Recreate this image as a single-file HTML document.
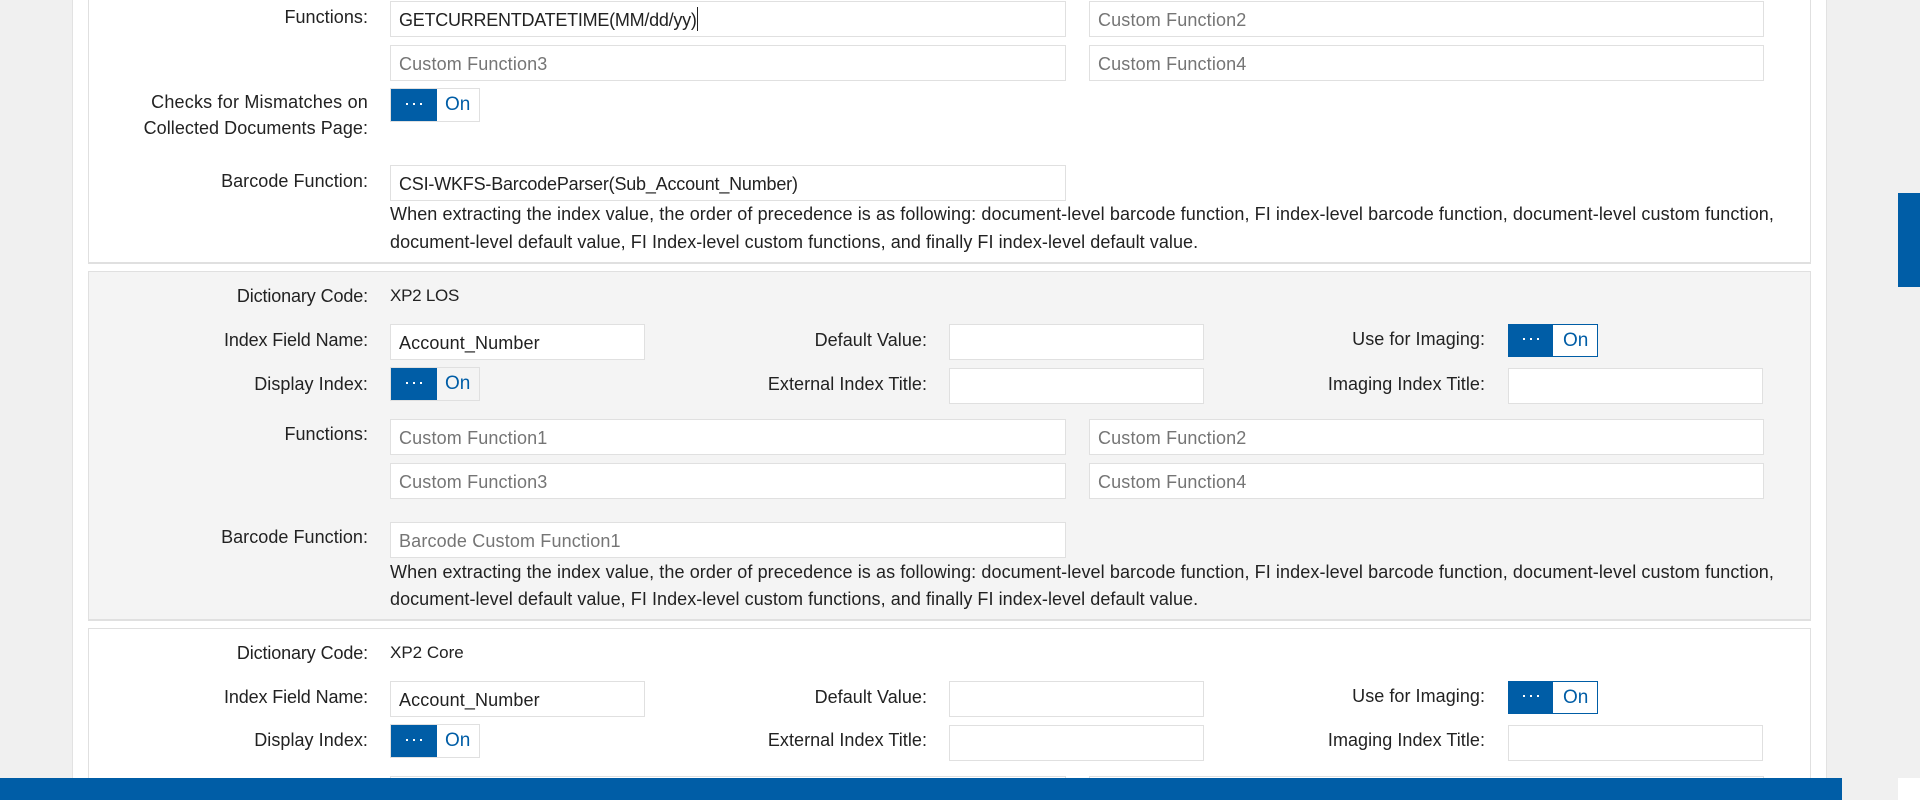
<!DOCTYPE html>
<html><head><meta charset="utf-8"><title>Index Settings</title>
<style>
html,body{margin:0;padding:0;width:1920px;height:800px;overflow:hidden;background:#f0f0f0}
body{position:relative;font-family:"Liberation Sans",sans-serif;font-size:18px;color:#222}
div{box-sizing:border-box}
.a{position:absolute}
.panel{left:72px;top:-2px;width:1755px;height:802px;background:#fff;border:1px solid #e2e2e2}
.box{left:88px;width:1723px;border:1px solid #e0e0e0;border-bottom-width:2px;background:#fff}
.g{background:#f4f4f4}
.l{position:absolute;text-align:right;line-height:20px;height:20px;white-space:nowrap;left:0;letter-spacing:.05px}
.c1{width:368px}.c2{width:927px}.c3{width:1485px}
.i{position:absolute;height:36px;border:1px solid #e0e0e0;background:#fff;line-height:36px;padding-left:8px;white-space:nowrap;overflow:hidden;letter-spacing:.12px}
.p{color:#757575;letter-spacing:.15px}
.w1{left:390px;width:676px}.w2{left:1089px;width:675px}.w3{left:390px;width:255px}.w4{left:949px;width:255px}.w5{left:1508px;width:255px}
.t{position:absolute;line-height:27px;white-space:nowrap;left:390px;letter-spacing:.095px}
.t2{letter-spacing:.055px}
.d{font-size:17px;letter-spacing:0}
.tg{position:absolute;width:90px;height:34px;border:1px solid #e0e0e0}
.tg.b{border-color:#005da6;background:#fff}
.tg .k{position:absolute;left:0;top:0;width:46px;height:32px;background:#005da6}
.tg.b .k{left:-1px;top:-1px;height:33px;width:45px}
.tg .k i{position:absolute;top:14px;width:2px;height:2px;background:#fff}
.tg .o{position:absolute;left:54px;top:5px;font-size:19px;line-height:22px;color:#005da6}
.f{letter-spacing:-.12px}
</style></head><body>
<div class="a panel"></div>
<div class="a" style="left:1898px;top:193px;width:22px;height:94px;background:#005da6"></div>

<div class="a box" style="top:-10px;height:274px"></div>
<div class="l c1" style="top:7px">Functions:</div>
<div class="i w1" style="top:1px;letter-spacing:-.25px">GETCURRENTDATETIME(MM/dd/yy)</div>
<div class="a" style="left:697px;top:7px;width:1px;height:24px;background:#222"></div>
<div class="i w2 p" style="top:1px">Custom Function2</div>
<div class="i w1 p" style="top:45px">Custom Function3</div>
<div class="i w2 p" style="top:45px">Custom Function4</div>
<div class="l c1" style="top:92px;letter-spacing:.2px">Checks for Mismatches on</div>
<div class="l c1" style="top:118px">Collected Documents Page:</div>
<div class="tg" style="left:390px;top:88px"><div class="k"><i style="left:15px"></i><i style="left:22px"></i><i style="left:29px"></i></div><div class="o">On</div></div>
<div class="l c1" style="top:171px">Barcode Function:</div>
<div class="i w1" style="top:165px;letter-spacing:-.2px">CSI-WKFS-BarcodeParser(Sub_Account_Number)</div>
<div class="t" style="top:201px">When extracting the index value, the order of precedence is as following: document-level barcode function, FI index-level barcode function, document-level custom function,</div>
<div class="t t2" style="top:229px">document-level default value, FI Index-level custom functions, and finally FI index-level default value.</div>

<div class="a box g" style="top:271px;height:350px"></div>
<div class="l c1 f" style="top:286px">Dictionary Code:</div>
<div class="t d" style="top:282px;letter-spacing:-.25px">XP2 LOS</div>
<div class="l c1 f" style="top:330px">Index Field Name:</div>
<div class="i w3" style="top:324px">Account_Number</div>
<div class="l c2" style="top:330px">Default Value:</div>
<div class="i w4" style="top:324px"></div>
<div class="l c3" style="top:329px">Use for Imaging:</div>
<div class="tg b" style="left:1508px;top:324px;height:33px"><div class="k"><i style="left:15px"></i><i style="left:22px"></i><i style="left:29px"></i></div><div class="o">On</div></div>
<div class="l c1" style="top:374px">Display Index:</div>
<div class="tg" style="left:390px;top:367px"><div class="k"><i style="left:15px"></i><i style="left:22px"></i><i style="left:29px"></i></div><div class="o">On</div></div>
<div class="l c2" style="top:374px">External Index Title:</div>
<div class="i w4" style="top:368px"></div>
<div class="l c3" style="top:374px">Imaging Index Title:</div>
<div class="i w5" style="top:368px"></div>
<div class="l c1" style="top:424px">Functions:</div>
<div class="i w1 p" style="top:419px">Custom Function1</div>
<div class="i w2 p" style="top:419px">Custom Function2</div>
<div class="i w1 p" style="top:463px">Custom Function3</div>
<div class="i w2 p" style="top:463px">Custom Function4</div>
<div class="l c1" style="top:527px">Barcode Function:</div>
<div class="i w1 p" style="top:522px">Barcode Custom Function1</div>
<div class="t" style="top:559px">When extracting the index value, the order of precedence is as following: document-level barcode function, FI index-level barcode function, document-level custom function,</div>
<div class="t t2" style="top:586px">document-level default value, FI Index-level custom functions, and finally FI index-level default value.</div>

<div class="a box" style="top:628px;height:180px"></div>
<div class="l c1 f" style="top:643px">Dictionary Code:</div>
<div class="t d" style="top:639px">XP2 Core</div>
<div class="l c1 f" style="top:687px">Index Field Name:</div>
<div class="i w3" style="top:681px">Account_Number</div>
<div class="l c2" style="top:687px">Default Value:</div>
<div class="i w4" style="top:681px"></div>
<div class="l c3" style="top:686px">Use for Imaging:</div>
<div class="tg b" style="left:1508px;top:681px;height:33px"><div class="k"><i style="left:15px"></i><i style="left:22px"></i><i style="left:29px"></i></div><div class="o">On</div></div>
<div class="l c1" style="top:730px">Display Index:</div>
<div class="tg" style="left:390px;top:724px"><div class="k"><i style="left:15px"></i><i style="left:22px"></i><i style="left:29px"></i></div><div class="o">On</div></div>
<div class="l c2" style="top:730px">External Index Title:</div>
<div class="i w4" style="top:725px"></div>
<div class="l c3" style="top:730px">Imaging Index Title:</div>
<div class="i w5" style="top:725px"></div>
<div class="i w1" style="top:776px"></div>
<div class="i w2" style="top:776px"></div>

<div class="a" style="left:0;top:778px;width:1842px;height:22px;background:#005da6"></div>
<div class="a" style="left:1842px;top:778px;width:56px;height:22px;background:#f0f0f0"></div>
<div class="a" style="left:1898px;top:778px;width:22px;height:22px;background:#fff"></div>
</body></html>
